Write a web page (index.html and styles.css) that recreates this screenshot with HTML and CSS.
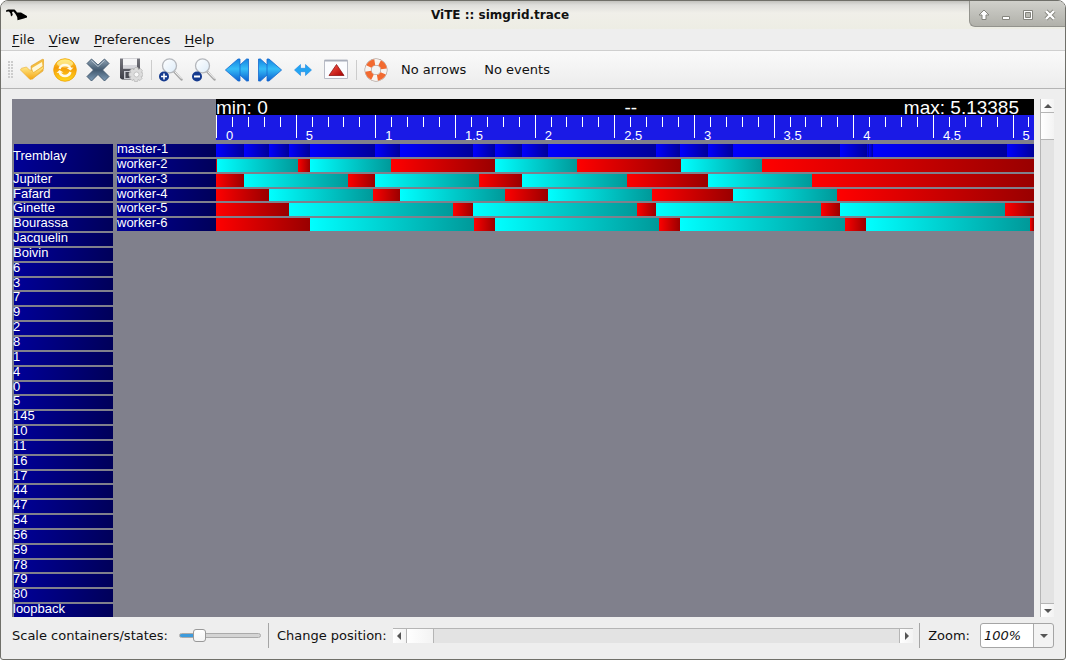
FILE: index.html
```
<!DOCTYPE html>
<html lang="en">
<head>
<meta charset="utf-8">
<title>ViTE :: simgrid.trace</title>
<link rel="stylesheet" href="styles.css">
</head>
<body>
<div class="window">
  <header class="titlebar">
    <svg class="logo" viewBox="0 0 22 12" width="22" height="12" aria-hidden="true"><path d="M0 1.500 2 .4 8.500 .4 10 2 11 3.600 15 3.600 21 7 21 8.500 17 9.800 11.500 11.300 11.200 8 9.500 5 7.500 2.600 6 3 6.800 6 5 7.500 4.500 4.500 3 2.500 0 2.800z"/></svg>
    <h1 class="title">ViTE :: simgrid.trace</h1>
    <div class="window-buttons">
      <button aria-label="Shade"><svg viewBox="0 0 12 12" width="12" height="12"><path d="M6 1 11 6H8v4.500H4V6H1z" fill="#fff" stroke="#85857e"/></svg></button>
      <button aria-label="Minimize"><svg viewBox="0 0 12 12" width="12" height="12"><path d="M2.500 7.500h7v3h-7z" fill="#fff" stroke="#85857e"/></svg></button>
      <button aria-label="Maximize"><svg viewBox="0 0 12 12" width="12" height="12"><path d="M1.500 1.500h9v9h-9z" fill="#fff" stroke="#85857e"/><path d="M3.500 3.500h5v5h-5z" fill="#b9b9b2" stroke="#85857e"/></svg></button>
      <button aria-label="Close"><svg viewBox="0 0 12 12" width="12" height="12"><path d="m2 2 8 8m0-8-8 8" stroke="#85857e" stroke-width="4"/><path d="m2 2 8 8m0-8-8 8" stroke="#fff" stroke-width="2.400"/></svg></button>
    </div>
  </header>

  <nav class="menubar">
    <button><u>F</u>ile</button>
    <button><u>V</u>iew</button>
    <button><u>P</u>references</button>
    <button><u>H</u>elp</button>
  </nav>

  <svg class="defs" width="0" height="0" aria-hidden="true">
    <defs>
      <linearGradient id="gold" x2="0" y2="1"><stop stop-color="#ffe98a"/><stop offset="1" stop-color="#f4a512"/></linearGradient>
      <linearGradient id="ring" x2="0" y2="1"><stop stop-color="#ffe23c"/><stop offset=".4" stop-color="#f59b08"/><stop offset="1" stop-color="#ffd91e"/></linearGradient>
      <linearGradient id="steel" x2="0" y2="1"><stop stop-color="#8fa3b4"/><stop offset=".5" stop-color="#435a70"/><stop offset="1" stop-color="#7f9db8"/></linearGradient>
      <linearGradient id="disk" x2="0" y2="1"><stop stop-color="#77777f"/><stop offset="1" stop-color="#3c3d47"/></linearGradient>
      <linearGradient id="sky" x2="0" y2="1"><stop stop-color="#1583e0"/><stop offset=".45" stop-color="#35bdf8"/><stop offset="1" stop-color="#0d62d0"/></linearGradient>
      <linearGradient id="ruby" x2="1" y2="1"><stop stop-color="#ff5a4c"/><stop offset="1" stop-color="#a80000"/></linearGradient>
      <linearGradient id="glass" x2="1" y2="1"><stop stop-color="#fff"/><stop offset="1" stop-color="#dcebf8"/></linearGradient>
    </defs>
  </svg>

  <div class="toolbar">
    <span class="grip"></span>
    <button class="tool" aria-label="Open"><svg viewBox="0 0 24 24"><path d="m11 8 11-6.500c1-.5 2 0 2 1L23 13l-11 8z" fill="#f3bd3f" stroke="#e0a02a" stroke-width=".6"/><path d="m12 10 10-6 .5 4L13 15z" fill="#fff8d8"/><path d="M.5 12c0-1 1-2 2-2l4-1 3 3c2 0 3.500 1 4 2.500L22.500 9c1-.5 1.500 0 1 1.500L12.500 21 10 21.500z" fill="url(#gold)" stroke="#e9ac34" stroke-width=".6"/></svg></button>
    <button class="tool" aria-label="Reload"><svg viewBox="0 0 24 24"><circle cx="12" cy="12" r="11.300" fill="url(#ring)" stroke="#f0a000" stroke-width=".8"/><ellipse cx="12" cy="5.500" rx="8" ry="4" fill="#fff1a0" opacity=".7"/><path d="M6.500 10.800a5.800 5.800 0 0 1 11 0M17.500 14a5.800 5.800 0 0 1-11 0" fill="none" stroke="#fffbe8" stroke-width="2.400"/><path d="m20.500 9.500-3 3-4-2.500zM3.500 15l3-3 4 2.500z" fill="#fffbe8"/></svg></button>
    <button class="tool" aria-label="Close trace"><svg viewBox="0 0 24 24"><path d="m5.500 1 6.500 6L18.500 1 23 5.500 16.500 12l6.500 6.500-4.500 4.500L12 16.500 5.500 23 1 18.500 7.500 12 1 5.500z" fill="url(#steel)" stroke="#3f566c" stroke-width=".9" stroke-linejoin="round"/><path d="m5.500 2.500 6.500 6 6.500-6" fill="none" stroke="#c3ced8" stroke-width=".9"/></svg></button>
    <button class="tool" aria-label="Export"><svg viewBox="0 0 24 24"><path d="M1 .5h20v17l-4 4H3L1 20z" fill="url(#disk)"/><path d="M4 .5h14v10H4z" fill="#f4f4f6"/><path d="M4 7h14v3.500H4z" fill="#d6d6dc"/><path d="M5 13h10v8H5z" fill="#c9cad2"/><path d="M6.500 14h4v6h-4z" fill="#4a4b54"/><g fill="#dcdcdc" stroke="#b5b5b5" stroke-width=".7"><path d="m16 9.500 3 0 .4 2 2-1 2 2-1 2 1.600.5v3l-2 .5 1 2-2 2-2-1-.5 2h-3l-.5-2-2 1-2-2 1-2-2-.5v-3l2-.5-1-2 2-2 2 1z"/><circle cx="17.500" cy="16.500" r="2.500" fill="#f8f8f8"/></g></svg></button>
    <span class="divider"></span>
    <button class="tool" aria-label="Zoom in"><svg viewBox="0 0 24 24"><path d="m15.500 14 7 7.500" stroke="#a6a6a6" stroke-width="2.400" stroke-linecap="round"/><path d="m15.500 13.500 7 7.300" stroke="#f2f2f2" stroke-width="1"/><circle cx="10.500" cy="7.800" r="7" fill="url(#glass)" stroke="#b4b7bc" stroke-width="1.300"/><circle cx="5" cy="18.500" r="5" fill="#153a8e"/><path d="M2 18.500h6M5 15.500v6" stroke="#fff" stroke-width="1.600"/></svg></button>
    <button class="tool" aria-label="Zoom out"><svg viewBox="0 0 24 24"><path d="m15.500 14 7 7.500" stroke="#a6a6a6" stroke-width="2.400" stroke-linecap="round"/><path d="m15.500 13.500 7 7.300" stroke="#f2f2f2" stroke-width="1"/><circle cx="10.500" cy="7.800" r="7" fill="url(#glass)" stroke="#b4b7bc" stroke-width="1.300"/><circle cx="5" cy="18.500" r="5" fill="#153a8e"/><path d="M2 18.500h6" stroke="#fff" stroke-width="1.800"/></svg></button>
    <button class="tool" aria-label="Go to start"><svg viewBox="0 0 24 24"><g fill="url(#sky)" stroke="#1468cf" stroke-width=".8"><path d="M23.500 1v22h-2L9.500 12 21.500 1z"/><path d="M15 1v22h-2L.4 12 13 1z"/></g></svg></button>
    <button class="tool" aria-label="Go to end"><svg viewBox="0 0 24 24"><g fill="url(#sky)" stroke="#1468cf" stroke-width=".8"><path d="M.5 1v22h2l12-11L2.500 1z"/><path d="M9 1v22h2l12.600-11L11 1z"/></g></svg></button>
    <button class="tool" aria-label="Show all"><svg viewBox="0 0 24 24"><path d="m3.500 12 6-5.500v3.800h5V6.500l6 5.500-6 5.500v-3.800h-5v3.800z" fill="#23a4f2" stroke="#1c86e2" stroke-width=".6"/></svg></button>
    <button class="tool" aria-label="Toggle minimap"><svg viewBox="0 0 24 24"><path d="M.5 2h23v18.500H.5z" fill="#fbfcff" stroke="#b9bcc6"/><path d="M1 2h22v1.500H1z" fill="#a9aebb"/><path d="m12.500 6.500 7.500 11H5z" fill="url(#ruby)" stroke="#8e1515" stroke-width=".8"/></svg></button>
    <span class="divider"></span>
    <button class="tool" aria-label="Help"><svg viewBox="0 0 24 24"><circle cx="12" cy="12" r="8" fill="none" stroke="#99847a" stroke-width="6.800"/><circle cx="12" cy="12" r="8" fill="none" stroke="#f7f3f0" stroke-width="5.800"/><circle cx="12" cy="12" r="8" fill="none" stroke="#f26a30" stroke-width="5.800" stroke-dasharray="7.570 5" transform="rotate(25 12 12)"/></svg></button>
    <span class="status">No arrows</span>
    <span class="status">No events</span>
  </div>

  <main class="content">
    <div class="trace">
      <div class="bounds"><span>min: 0</span><span>--</span><span>max: 5.13385</span></div>
      <div class="ruler">
        <div class="major"><i></i><i></i><i></i><i></i><b>0</b></div>
        <div class="major"><i></i><i></i><i></i><i></i><b>5</b></div>
        <div class="major"><i></i><i></i><i></i><i></i><b>1</b></div>
        <div class="major"><i></i><i></i><i></i><i></i><b>1.5</b></div>
        <div class="major"><i></i><i></i><i></i><i></i><b>2</b></div>
        <div class="major"><i></i><i></i><i></i><i></i><b>2.5</b></div>
        <div class="major"><i></i><i></i><i></i><i></i><b>3</b></div>
        <div class="major"><i></i><i></i><i></i><i></i><b>3.5</b></div>
        <div class="major"><i></i><i></i><i></i><i></i><b>4</b></div>
        <div class="major"><i></i><i></i><i></i><i></i><b>4.5</b></div>
        <div class="major"><i></i><i></i><i></i><i></i><b>5</b></div>
      </div>
      <div class="hosts">
        <span class="double">Tremblay</span><span>Jupiter</span><span>Fafard</span><span>Ginette</span><span>Bourassa</span><span>Jacquelin</span><span>Boivin</span><span>6</span><span>3</span><span>7</span><span>9</span><span>2</span><span>8</span><span>1</span><span>4</span><span>0</span><span>5</span><span>145</span><span>10</span><span>11</span><span>16</span><span>17</span><span>44</span><span>47</span><span>54</span><span>56</span><span>59</span><span>78</span><span>79</span><span>80</span><span>loopback</span>
      </div>
      <div class="processes">
        <span>master-1</span><span>worker-2</span><span>worker-3</span><span>worker-4</span><span>worker-5</span><span>worker-6</span>
      </div>
      <div class="states">
        <div class="lane"><i class="send" style="flex-grow:28"></i><i class="send" style="flex-grow:25"></i><i class="send" style="flex-grow:20"></i><i class="send" style="flex-grow:21"></i><i class="send" style="flex-grow:65"></i><i class="send" style="flex-grow:25"></i><i class="send" style="flex-grow:73"></i><i class="send" style="flex-grow:22"></i><i class="send" style="flex-grow:27"></i><i class="send" style="flex-grow:26"></i><i class="send" style="flex-grow:108"></i><i class="send" style="flex-grow:24"></i><i class="send" style="flex-grow:28"></i><i class="send" style="flex-grow:25"></i><i class="send" style="flex-grow:107"></i><i class="send" style="flex-grow:27"></i><i class="send" style="flex-grow:2"></i><i class="send" style="flex-grow:4"></i><i class="send" style="flex-grow:134"></i><i class="send" style="flex-grow:27"></i></div>
        <div class="lane"><i class="wait" style="flex-grow:1"></i><i class="run" style="flex-grow:81"></i><i class="wait" style="flex-grow:12"></i><i class="run" style="flex-grow:81"></i><i class="wait" style="flex-grow:104"></i><i class="run" style="flex-grow:82"></i><i class="wait" style="flex-grow:104"></i><i class="run" style="flex-grow:81"></i><i class="wait" style="flex-grow:272"></i></div>
        <div class="lane"><i class="wait" style="flex-grow:28"></i><i class="run" style="flex-grow:104"></i><i class="wait" style="flex-grow:27"></i><i class="run" style="flex-grow:104"></i><i class="wait" style="flex-grow:43"></i><i class="run" style="flex-grow:105"></i><i class="wait" style="flex-grow:81"></i><i class="run" style="flex-grow:104"></i><i class="wait" style="flex-grow:222"></i></div>
        <div class="lane"><i class="wait" style="flex-grow:53"></i><i class="run" style="flex-grow:104"></i><i class="wait" style="flex-grow:27"></i><i class="run" style="flex-grow:105"></i><i class="wait" style="flex-grow:43"></i><i class="run" style="flex-grow:104"></i><i class="wait" style="flex-grow:81"></i><i class="run" style="flex-grow:104"></i><i class="wait" style="flex-grow:197"></i></div>
        <div class="lane"><i class="wait" style="flex-grow:73"></i><i class="run" style="flex-grow:164"></i><i class="wait" style="flex-grow:20"></i><i class="run" style="flex-grow:164"></i><i class="wait" style="flex-grow:19"></i><i class="run" style="flex-grow:165"></i><i class="wait" style="flex-grow:19"></i><i class="run" style="flex-grow:165"></i><i class="wait" style="flex-grow:29"></i></div>
        <div class="lane"><i class="wait" style="flex-grow:94"></i><i class="run" style="flex-grow:164"></i><i class="wait" style="flex-grow:21"></i><i class="run" style="flex-grow:164"></i><i class="wait" style="flex-grow:21"></i><i class="run" style="flex-grow:165"></i><i class="wait" style="flex-grow:21"></i><i class="run" style="flex-grow:164"></i><i class="wait" style="flex-grow:4"></i></div>
      </div>
    </div>
    <div class="scroll vertical">
      <button aria-label="Scroll up"><svg viewBox="0 0 8 4" width="8" height="4"><path d="M0 4 4 0l4 4z"/></svg></button>
      <span class="thumb"></span>
      <button class="end" aria-label="Scroll down"><svg viewBox="0 0 8 4" width="8" height="4"><path d="m0 0 4 4 4-4z"/></svg></button>
    </div>
  </main>

  <footer class="controls">
    <label for="scale">Scale containers/states:</label>
    <input class="slider" id="scale" type="range" min="0" max="100" value="20">
    <span class="bar"></span>
    <span class="position-label">Change position:</span>
    <div class="scroll horizontal">
      <button aria-label="Scroll left"><svg viewBox="0 0 4 8" width="4" height="8"><path d="M4 0 0 4l4 4z"/></svg></button>
      <span class="thumb"></span>
      <button class="end" aria-label="Scroll right"><svg viewBox="0 0 4 8" width="4" height="8"><path d="m0 0 4 4-4 4z"/></svg></button>
    </div>
    <span class="bar"></span>
    <label class="zoom-label" for="zoom">Zoom:</label>
    <div class="combo">
      <select id="zoom"><option>100%</option><option>200%</option></select>
      <svg viewBox="0 0 8 4" width="8" height="4" aria-hidden="true"><path d="m0 0 4 4 4-4z"/></svg>
    </div>
  </footer>
</div>
</body>
</html>
```
FILE: styles.css
```
* { box-sizing: border-box; }

body {
  margin: 0;
  background: #fff;
  color: #111;
  font: 13px/16px "DejaVu Sans", sans-serif;
}

button {
  display: flex;
  align-items: center;
  justify-content: center;
  margin: 0;
  padding: 0;
  border: 0;
  background: none;
  color: inherit;
  font: inherit;
}

svg { display: block; }

.defs { position: absolute; }

.window {
  display: flex;
  flex-direction: column;
  height: 100vh;
  overflow: hidden;
  border: 1px solid #6f6f69;
  border-radius: 8px 8px 3px 3px;
  background: #eee;
}

/* Title bar */
.titlebar {
  display: grid;
  grid-template-columns: 30px 1fr 96px;
  flex: none;
  height: 28px;
  background: linear-gradient(#c2c2be, #dededb 4px, #f0efe9 12px, #edede4);
}

.logo { margin: 8px 0 0 5px; }

.title {
  align-self: center;
  margin: 0;
  text-align: center;
  font-size: 12px;
  line-height: 16px;
  font-weight: bold;
}

.window-buttons {
  display: grid;
  grid-template-columns: repeat(4, 22px);
  align-items: center;
  justify-content: end;
  height: 26px;
  padding: 2px 4px 0 0;
  border: solid #93938d;
  border-width: 0 0 1px 1px;
  border-radius: 0 0 0 6px;
  background: linear-gradient(#d0d0cb, #b1b1aa);
}

/* Menus */
.menubar {
  display: flex;
  flex: none;
  align-items: center;
  gap: 14px;
  height: 22px;
  padding: 0 11px;
  border-bottom: 1px solid #cfcfcf;
}

.menubar u {
  text-underline-offset: 2px;
  text-decoration-thickness: 1px;
}

/* Toolbar */
.toolbar {
  display: flex;
  flex: none;
  align-items: center;
  height: 38px;
  border-bottom: 1px solid #b4b4b4;
  background: linear-gradient(#fafafa, #ececec);
}

.grip {
  width: 5px;
  height: 17px;
  margin: 0 2px 0 7px;
  background: radial-gradient(circle at 1px 1px, #ccc 1px, transparent 1px) 0 0 / 3px 3px;
}

.tool {
  width: 33px;
  height: 32px;
}

.tool svg {
  width: 24px;
  height: 24px;
}

.divider {
  width: 7px;
  height: 20px;
  background: linear-gradient(#ccc, #ccc) 4px 0 / 1px 100% no-repeat;
}

.status { margin: 0 9px; }

/* Trace view */
.content {
  display: flex;
  flex: 1;
  gap: 6px;
  min-height: 0;
  padding: 10px 11px 0;
}

.trace {
  display: grid;
  flex: 1;
  grid-template-columns: 99px 99px 1fr;
  grid-template-rows: 16px 25px 1fr;
  column-gap: 4px;
  min-width: 0;
  padding-left: 2px;
  background: #80808c;
  color: #fff;
  font: 13px/9px "Liberation Sans", Arial, sans-serif;
}

.bounds,
.ruler,
.states {
  grid-column: 3;
  margin-left: -4px;
}

.bounds {
  display: grid;
  grid-template-columns: 50% 1fr auto;
  padding-right: 15px;
  background: #000;
  font-size: 19px;
  line-height: 18px;
}

.bounds span:nth-child(2) { padding-left: 7px; }

.ruler {
  display: flex;
  overflow-x: clip;
  background: #1a1ae6;
}

.major {
  display: grid;
  flex: 0 0 calc(100% / 10.268);
  grid-template-columns: repeat(5, 1fr);
  grid-template-rows: 10px 13px;
  row-gap: 2px;
  height: 23px;
  padding-top: 2px;
  background: linear-gradient(#fff, #fff) 0 0 / 1px 100% no-repeat;
}

.major i { border-left: 1px solid #fff; }
.major i:first-child { grid-column: 2; }

.major b {
  grid-row: 2;
  grid-column: 1 / -1;
  padding-left: 10px;
  font-weight: normal;
  line-height: 13px;
}

.hosts,
.processes,
.states {
  display: grid;
  grid-template-rows: repeat(32, 1fr);
  grid-row: 3;
  row-gap: 2px;
  min-height: 0;
  margin-top: 4px;
}

.hosts { text-indent: -1px; }

.hosts span,
.processes span {
  min-height: 0;
  background: linear-gradient(100deg, #000099, #000059);
}

.hosts .double {
  grid-row: span 2;
  padding-top: 7px;
}

.lane {
  display: flex;
  min-height: 0;
}

.lane i { flex: 0 1 0; }

.send { background: linear-gradient(90deg, #00f, #009); }
.run { background: linear-gradient(90deg, #0ff, #099); }
.wait { background: linear-gradient(90deg, #f00, #900); }

/* Scroll bars */
.scroll {
  display: flex;
  border: 0 solid #b5b5b5;
  background: #e3e3e3;
}

.scroll button,
.scroll .thumb {
  flex: none;
  background: linear-gradient(90deg, #fff, #f3f3f3);
}

.scroll svg,
.combo svg { fill: #555; }

.vertical {
  flex-direction: column;
  flex: none;
  width: 14px;
  border-left-width: 1px;
}

.vertical button {
  height: 14px;
  border-bottom: 1px solid #b5b5b5;
}

.vertical .thumb {
  height: 27px;
  border-bottom: 1px solid #b5b5b5;
}

.vertical .end {
  margin-top: auto;
  border-top: 1px solid #b5b5b5;
  border-bottom: 0;
}

.horizontal {
  flex: 1;
  height: 15px;
  margin-right: 6px;
  border-top-width: 1px;
}

.horizontal button {
  width: 14px;
  border-right: 1px solid #b5b5b5;
}

.horizontal .thumb {
  width: 27px;
  border-right: 1px solid #b5b5b5;
}

.horizontal .end {
  margin-left: auto;
  border-right: 0;
  border-left: 1px solid #b5b5b5;
}

/* Bottom controls */
.controls {
  display: flex;
  flex: none;
  align-items: center;
  height: 42px;
  padding: 0 11px 5px;
}

.slider {
  flex: none;
  width: 82px;
  height: 14px;
  margin: 0 7px 0 11px;
  appearance: none;
  background: none;
}

.slider::-webkit-slider-runnable-track {
  height: 5px;
  border: 1px solid #aaa;
  border-radius: 3px;
  background: linear-gradient(90deg, #3d9bdc 25%, #d4d4d4 25%);
}

.slider::-webkit-slider-thumb {
  width: 13px;
  height: 13px;
  margin-top: -5px;
  appearance: none;
  border: 1px solid #999;
  border-radius: 3px;
  background: linear-gradient(#fff, #f4f4f4);
}

.bar {
  width: 1px;
  height: 25px;
  background: #a5a5a5;
}

.position-label { margin: 0 6px 0 8px; }

.zoom-label { margin: 0 10px 0 8px; }

.combo {
  display: grid;
  grid-template-columns: 1fr 21px;
  align-items: center;
  width: 74px;
}

.combo select {
  grid-row: 1;
  grid-column: 1 / -1;
  height: 25px;
  padding: 0 3px;
  appearance: none;
  border: 1px solid #a5a5a5;
  border-radius: 3px;
  background: linear-gradient(90deg, #fff calc(100% - 20px), #aaa calc(100% - 20px), #aaa calc(100% - 19px), #f3f3f3 calc(100% - 19px));
  color: #111;
  font: italic 13px/16px "DejaVu Sans", sans-serif;
}

.combo svg {
  grid-row: 1;
  grid-column: 2;
  justify-self: center;
  pointer-events: none;
}
```
